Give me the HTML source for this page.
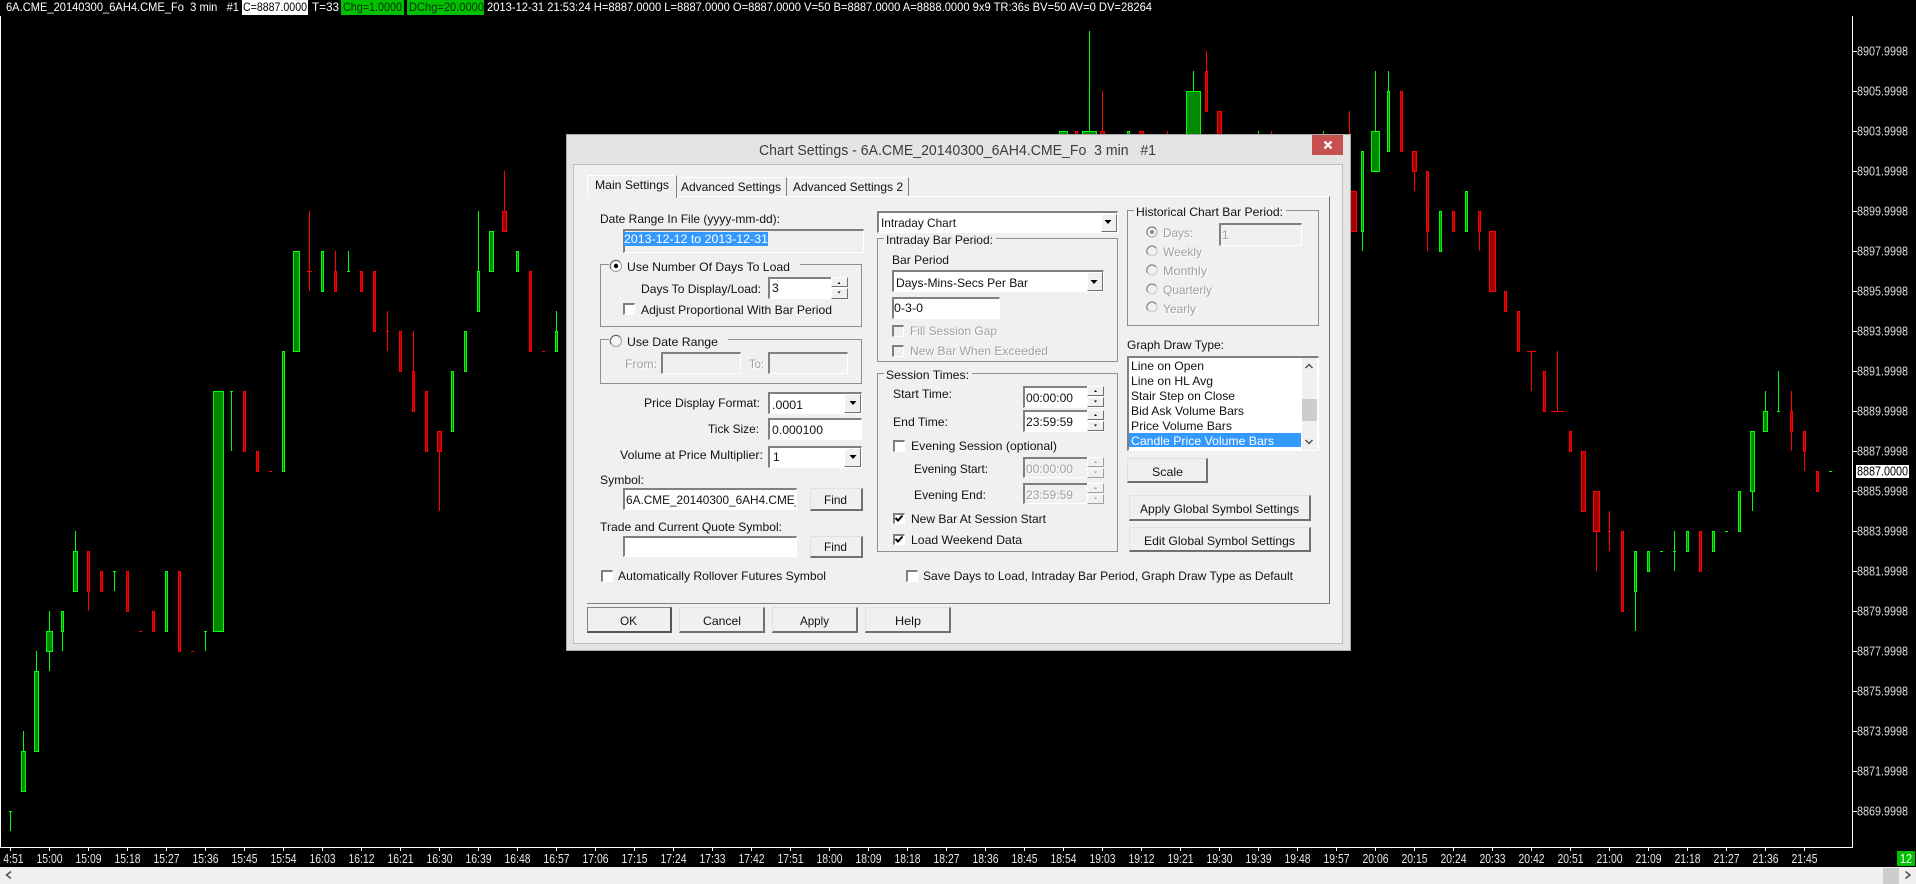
<!DOCTYPE html>
<html><head><meta charset="utf-8"><title>Chart Settings</title>
<style>
html,body{margin:0;padding:0;width:1916px;height:884px;overflow:hidden;background:#000}
svg{position:absolute;left:0;top:0}
text{font-family:"Liberation Sans",sans-serif;font-size:12px;fill:#111}
.a{position:absolute;box-sizing:border-box}
.btn{background:#f0f0f0;border-style:solid;border-width:1px 2px 2px 1px;border-color:#e0e0e0 #707070 #707070 #e0e0e0}
.ed{background:#fff;border-style:solid;border-width:2px 1px 1px 2px;border-color:#808080 #fff #fff #808080}
.dis{background:#f0f0f0}
.grp{border:1px solid #8f8f8f}
.gap{background:#f0f0f0}
.sb{background:#f0f0f0;border-style:solid;border-width:1px;border-color:#fff #707070 #707070 #fff}
.sbd{background:#f0f0f0;border-style:solid;border-width:1px;border-color:#fff #a0a0a0 #a0a0a0 #fff}
.tick{font-size:12.5px;fill:#e8e8e8;text-anchor:middle}
.prc{font-size:12.5px;fill:#dcdcdc}
.d text{fill:#a0a0a0}
.d{filter:drop-shadow(1px 1px 0 #fff)}
</style></head><body>
<svg width="1916" height="884" viewBox="0 0 1916 884">
<rect width="1916" height="884" fill="#000"/>
<!-- top bar -->
<rect x="242" y="0" width="66" height="15" fill="#fff"/>
<rect x="341" y="0" width="63" height="15" fill="#00c000"/>
<rect x="407" y="0" width="77" height="15" fill="#00c000"/>
<text x="6" y="11" style="fill:#fff" textLength="233" lengthAdjust="spacingAndGlyphs">6A.CME_20140300_6AH4.CME_Fo&#160;&#160;3 min&#160;&#160;&#160;#1</text>
<text x="243" y="11" style="fill:#000" textLength="64" lengthAdjust="spacingAndGlyphs">C=8887.0000</text>
<text x="312" y="11" style="fill:#fff" textLength="27" lengthAdjust="spacingAndGlyphs">T=33</text>
<text x="343" y="11" style="fill:#003000" textLength="59" lengthAdjust="spacingAndGlyphs">Chg=1.0000</text>
<text x="409" y="11" style="fill:#003000" textLength="75" lengthAdjust="spacingAndGlyphs">DChg=20.0000</text>
<text x="487" y="11" style="fill:#fff" textLength="665" lengthAdjust="spacingAndGlyphs">2013-12-31 21:53:24 H=8887.0000 L=8887.0000 O=8887.0000 V=50 B=8887.0000 A=8888.0000 9x9 TR:36s BV=50 AV=0 DV=28264</text>
<!-- axes -->
<path d="M.5 16V847.5H1852.5V16" fill="none" stroke="#fff"/>
<line x1="10" y1="849" x2="1806" y2="849" stroke="#fff" stroke-width="4" stroke-dasharray="1 38"/>
<line x1="1855" y1="51" x2="1855" y2="812" stroke="#fff" stroke-width="4" stroke-dasharray="1 39"/>
<!-- wicks -->
<path fill="none" stroke="#00ff00" d="M10.5 811V831M23.5 731V751M36.5 651V671M49.5 611V671M62.5 611V651M75.5 531V551M114.5 571V591M205.5 631V651M231.5 391V451M348.5 251V271M478.5 211V271M556.5 311V331M1089.5 31V131M1193.5 71V91M1258.5 131V134M1323.5 131V134M1362.5 231V251M1375.5 71V131M1388.5 71V91M1635.5 591V631M1674.5 531V571M1752.5 491V511M1765.5 391V411M1778.5 371V411M9 811.5h3M113 571.5h3M204 631.5h3M230 391.5h3M347 271.5h3M1660 551.5h3M1673 551.5h3M1725 531.5h3M1777 411.5h3M1829 471.5h3"/>
<path fill="none" stroke="#ff0000" d="M88.5 591V611M309.5 211V291M335.5 251V271M387.5 311V351M413.5 331V371M439.5 451V511M504.5 171V211M1102.5 91V131M1167.5 131V134M1206.5 51V71M1271.5 131V134M1349.5 111V134M1414.5 171V191M1427.5 231V251M1479.5 231V251M1531.5 351V391M1557.5 351V411M1596.5 531V571M1609.5 511V551M1791.5 391V451M1804.5 451V471M139 631.5h3M191 651.5h3M269 471.5h3M307 271.5h5M386 331.5h3M542 351.5h3M1527 351.5h9M1551 411.5h13M1608 531.5h3"/>
<!-- green bodies -->
<g fill="#008800" stroke="#00ff00">
<rect x="21.5" y="751.5" width="4" height="40"/><rect x="34.5" y="671.5" width="4" height="80"/><rect x="46.5" y="631.5" width="6" height="20"/><rect x="61.5" y="611.5" width="2" height="20"/><rect x="73.5" y="551.5" width="4" height="40"/><rect x="165.5" y="571.5" width="2" height="60"/><rect x="213.5" y="391.5" width="10" height="240"/><rect x="282.5" y="351.5" width="2" height="120"/><rect x="293.5" y="251.5" width="6" height="100"/><rect x="321.5" y="251.5" width="2" height="40"/><rect x="451.5" y="371.5" width="2" height="60"/><rect x="464.5" y="331.5" width="2" height="40"/><rect x="477.5" y="271.5" width="2" height="40"/><rect x="489.5" y="231.5" width="4" height="40"/><rect x="516.5" y="251.5" width="2" height="20"/><rect x="555.5" y="331.5" width="2" height="20"/><rect x="1059.5" y="131.5" width="8" height="20"/><rect x="1082.5" y="131.5" width="14" height="20"/><rect x="1127.5" y="131.5" width="2" height="20"/><rect x="1186.5" y="91.5" width="14" height="60"/><rect x="1361.5" y="151.5" width="2" height="80"/><rect x="1371.5" y="131.5" width="8" height="40"/><rect x="1387.5" y="91.5" width="2" height="60"/><rect x="1439.5" y="211.5" width="2" height="40"/><rect x="1465.5" y="191.5" width="2" height="40"/><rect x="1634.5" y="551.5" width="2" height="40"/><rect x="1647.5" y="551.5" width="2" height="20"/><rect x="1686.5" y="531.5" width="2" height="20"/><rect x="1712.5" y="531.5" width="2" height="20"/><rect x="1738.5" y="491.5" width="2" height="40"/><rect x="1750.5" y="431.5" width="4" height="60"/><rect x="1763.5" y="411.5" width="4" height="20"/>
</g>
<!-- red bodies -->
<g fill="#a00000" stroke="#ff0000">
<rect x="87.5" y="551.5" width="2" height="40"/><rect x="100.5" y="571.5" width="2" height="20"/><rect x="126.5" y="571.5" width="2" height="40"/><rect x="152.5" y="611.5" width="2" height="20"/><rect x="178.5" y="571.5" width="2" height="80"/><rect x="243.5" y="391.5" width="2" height="60"/><rect x="256.5" y="451.5" width="2" height="20"/><rect x="334.5" y="271.5" width="2" height="20"/><rect x="360.5" y="271.5" width="2" height="20"/><rect x="373.5" y="271.5" width="2" height="60"/><rect x="399.5" y="331.5" width="2" height="40"/><rect x="412.5" y="371.5" width="2" height="40"/><rect x="425.5" y="391.5" width="2" height="60"/><rect x="437.5" y="431.5" width="4" height="20"/><rect x="502.5" y="211.5" width="4" height="20"/><rect x="529.5" y="271.5" width="2" height="80"/><rect x="1075.5" y="131.5" width="2" height="20"/><rect x="1100.5" y="131.5" width="4" height="20"/><rect x="1139.5" y="131.5" width="4" height="20"/><rect x="1205.5" y="71.5" width="2" height="40"/><rect x="1217.5" y="111.5" width="4" height="30"/><rect x="1342.5" y="191.5" width="14" height="40"/><rect x="1400.5" y="91.5" width="2" height="60"/><rect x="1412.5" y="151.5" width="4" height="20"/><rect x="1426.5" y="171.5" width="2" height="60"/><rect x="1452.5" y="211.5" width="2" height="20"/><rect x="1478.5" y="211.5" width="2" height="20"/><rect x="1489.5" y="231.5" width="6" height="60"/><rect x="1504.5" y="291.5" width="2" height="20"/><rect x="1517.5" y="311.5" width="2" height="40"/><rect x="1543.5" y="371.5" width="2" height="40"/><rect x="1569.5" y="431.5" width="2" height="20"/><rect x="1581.5" y="451.5" width="4" height="60"/><rect x="1593.5" y="491.5" width="6" height="40"/><rect x="1621.5" y="531.5" width="2" height="80"/><rect x="1699.5" y="531.5" width="2" height="40"/><rect x="1790.5" y="411.5" width="2" height="20"/><rect x="1803.5" y="431.5" width="2" height="20"/><rect x="1816.5" y="471.5" width="2" height="20"/>
</g>
<!-- price labels -->
<text class="prc" x="1857" y="55.5" textLength="51" lengthAdjust="spacingAndGlyphs">8907.9998</text>
<text class="prc" x="1857" y="95.5" textLength="51" lengthAdjust="spacingAndGlyphs">8905.9998</text>
<text class="prc" x="1857" y="135.5" textLength="51" lengthAdjust="spacingAndGlyphs">8903.9998</text>
<text class="prc" x="1857" y="175.5" textLength="51" lengthAdjust="spacingAndGlyphs">8901.9998</text>
<text class="prc" x="1857" y="215.5" textLength="51" lengthAdjust="spacingAndGlyphs">8899.9998</text>
<text class="prc" x="1857" y="255.5" textLength="51" lengthAdjust="spacingAndGlyphs">8897.9998</text>
<text class="prc" x="1857" y="295.5" textLength="51" lengthAdjust="spacingAndGlyphs">8895.9998</text>
<text class="prc" x="1857" y="335.5" textLength="51" lengthAdjust="spacingAndGlyphs">8893.9998</text>
<text class="prc" x="1857" y="375.5" textLength="51" lengthAdjust="spacingAndGlyphs">8891.9998</text>
<text class="prc" x="1857" y="415.5" textLength="51" lengthAdjust="spacingAndGlyphs">8889.9998</text>
<text class="prc" x="1857" y="455.5" textLength="51" lengthAdjust="spacingAndGlyphs">8887.9998</text>
<text class="prc" x="1857" y="495.5" textLength="51" lengthAdjust="spacingAndGlyphs">8885.9998</text>
<text class="prc" x="1857" y="535.5" textLength="51" lengthAdjust="spacingAndGlyphs">8883.9998</text>
<text class="prc" x="1857" y="575.5" textLength="51" lengthAdjust="spacingAndGlyphs">8881.9998</text>
<text class="prc" x="1857" y="615.5" textLength="51" lengthAdjust="spacingAndGlyphs">8879.9998</text>
<text class="prc" x="1857" y="655.5" textLength="51" lengthAdjust="spacingAndGlyphs">8877.9998</text>
<text class="prc" x="1857" y="695.5" textLength="51" lengthAdjust="spacingAndGlyphs">8875.9998</text>
<text class="prc" x="1857" y="735.5" textLength="51" lengthAdjust="spacingAndGlyphs">8873.9998</text>
<text class="prc" x="1857" y="775.5" textLength="51" lengthAdjust="spacingAndGlyphs">8871.9998</text>
<text class="prc" x="1857" y="815.5" textLength="51" lengthAdjust="spacingAndGlyphs">8869.9998</text>
<rect x="1856" y="465" width="53" height="13" fill="#fff"/>
<text class="prc" x="1857" y="475.5" style="fill:#000" textLength="51" lengthAdjust="spacingAndGlyphs">8887.0000</text>
<!-- time labels -->
<text class="tick" x="10.5" y="863" textLength="26" lengthAdjust="spacingAndGlyphs">14:51</text>
<rect x="0" y="852" width="3" height="14" fill="#000"/>
<text class="tick" x="49.5" y="863" textLength="26" lengthAdjust="spacingAndGlyphs">15:00</text>
<text class="tick" x="88.5" y="863" textLength="26" lengthAdjust="spacingAndGlyphs">15:09</text>
<text class="tick" x="127.5" y="863" textLength="26" lengthAdjust="spacingAndGlyphs">15:18</text>
<text class="tick" x="166.5" y="863" textLength="26" lengthAdjust="spacingAndGlyphs">15:27</text>
<text class="tick" x="205.5" y="863" textLength="26" lengthAdjust="spacingAndGlyphs">15:36</text>
<text class="tick" x="244.5" y="863" textLength="26" lengthAdjust="spacingAndGlyphs">15:45</text>
<text class="tick" x="283.5" y="863" textLength="26" lengthAdjust="spacingAndGlyphs">15:54</text>
<text class="tick" x="322.5" y="863" textLength="26" lengthAdjust="spacingAndGlyphs">16:03</text>
<text class="tick" x="361.5" y="863" textLength="26" lengthAdjust="spacingAndGlyphs">16:12</text>
<text class="tick" x="400.5" y="863" textLength="26" lengthAdjust="spacingAndGlyphs">16:21</text>
<text class="tick" x="439.5" y="863" textLength="26" lengthAdjust="spacingAndGlyphs">16:30</text>
<text class="tick" x="478.5" y="863" textLength="26" lengthAdjust="spacingAndGlyphs">16:39</text>
<text class="tick" x="517.5" y="863" textLength="26" lengthAdjust="spacingAndGlyphs">16:48</text>
<text class="tick" x="556.5" y="863" textLength="26" lengthAdjust="spacingAndGlyphs">16:57</text>
<text class="tick" x="595.5" y="863" textLength="26" lengthAdjust="spacingAndGlyphs">17:06</text>
<text class="tick" x="634.5" y="863" textLength="26" lengthAdjust="spacingAndGlyphs">17:15</text>
<text class="tick" x="673.5" y="863" textLength="26" lengthAdjust="spacingAndGlyphs">17:24</text>
<text class="tick" x="712.5" y="863" textLength="26" lengthAdjust="spacingAndGlyphs">17:33</text>
<text class="tick" x="751.5" y="863" textLength="26" lengthAdjust="spacingAndGlyphs">17:42</text>
<text class="tick" x="790.5" y="863" textLength="26" lengthAdjust="spacingAndGlyphs">17:51</text>
<text class="tick" x="829.5" y="863" textLength="26" lengthAdjust="spacingAndGlyphs">18:00</text>
<text class="tick" x="868.5" y="863" textLength="26" lengthAdjust="spacingAndGlyphs">18:09</text>
<text class="tick" x="907.5" y="863" textLength="26" lengthAdjust="spacingAndGlyphs">18:18</text>
<text class="tick" x="946.5" y="863" textLength="26" lengthAdjust="spacingAndGlyphs">18:27</text>
<text class="tick" x="985.5" y="863" textLength="26" lengthAdjust="spacingAndGlyphs">18:36</text>
<text class="tick" x="1024.5" y="863" textLength="26" lengthAdjust="spacingAndGlyphs">18:45</text>
<text class="tick" x="1063.5" y="863" textLength="26" lengthAdjust="spacingAndGlyphs">18:54</text>
<text class="tick" x="1102.5" y="863" textLength="26" lengthAdjust="spacingAndGlyphs">19:03</text>
<text class="tick" x="1141.5" y="863" textLength="26" lengthAdjust="spacingAndGlyphs">19:12</text>
<text class="tick" x="1180.5" y="863" textLength="26" lengthAdjust="spacingAndGlyphs">19:21</text>
<text class="tick" x="1219.5" y="863" textLength="26" lengthAdjust="spacingAndGlyphs">19:30</text>
<text class="tick" x="1258.5" y="863" textLength="26" lengthAdjust="spacingAndGlyphs">19:39</text>
<text class="tick" x="1297.5" y="863" textLength="26" lengthAdjust="spacingAndGlyphs">19:48</text>
<text class="tick" x="1336.5" y="863" textLength="26" lengthAdjust="spacingAndGlyphs">19:57</text>
<text class="tick" x="1375.5" y="863" textLength="26" lengthAdjust="spacingAndGlyphs">20:06</text>
<text class="tick" x="1414.5" y="863" textLength="26" lengthAdjust="spacingAndGlyphs">20:15</text>
<text class="tick" x="1453.5" y="863" textLength="26" lengthAdjust="spacingAndGlyphs">20:24</text>
<text class="tick" x="1492.5" y="863" textLength="26" lengthAdjust="spacingAndGlyphs">20:33</text>
<text class="tick" x="1531.5" y="863" textLength="26" lengthAdjust="spacingAndGlyphs">20:42</text>
<text class="tick" x="1570.5" y="863" textLength="26" lengthAdjust="spacingAndGlyphs">20:51</text>
<text class="tick" x="1609.5" y="863" textLength="26" lengthAdjust="spacingAndGlyphs">21:00</text>
<text class="tick" x="1648.5" y="863" textLength="26" lengthAdjust="spacingAndGlyphs">21:09</text>
<text class="tick" x="1687.5" y="863" textLength="26" lengthAdjust="spacingAndGlyphs">21:18</text>
<text class="tick" x="1726.5" y="863" textLength="26" lengthAdjust="spacingAndGlyphs">21:27</text>
<text class="tick" x="1765.5" y="863" textLength="26" lengthAdjust="spacingAndGlyphs">21:36</text>
<text class="tick" x="1804.5" y="863" textLength="26" lengthAdjust="spacingAndGlyphs">21:45</text>
<rect x="1897" y="851" width="18" height="15" fill="#00c000"/>
<text x="1906" y="863" style="fill:#fff;text-anchor:middle;font-size:12.5px" textLength="12" lengthAdjust="spacingAndGlyphs">12</text>
<!-- bottom scrollbar -->
<rect x="0" y="867" width="1916" height="17" fill="#f0f0f0"/>
<rect x="1883" y="868" width="16" height="16" fill="#cdcdcd"/>
<path d="M11 871.500l-4.500 3.500 4.500 3.500M1905.500 871.500l4.500 3.500-4.500 3.500" fill="none" stroke="#505050" stroke-width="1.500"/>
</svg>

<!-- dialog -->
<div class="a" style="left:566px;top:134px;width:785px;height:517px;background:#e4e4e4;border:1px solid #a8a8a8"></div>
<div class="a" style="left:1312px;top:135px;width:31px;height:20px;background:#c75050"></div>
<div class="a" style="left:573px;top:164px;width:770px;height:480px;background:#f0f0f0;border:1px solid #c0c0c0"></div>
<!-- tab page -->
<div class="a" style="left:587px;top:196px;width:743px;height:408px;border-top:1px solid #fff;border-right:1px solid #707070;border-bottom:1px solid #808080"></div>
<div class="a" style="left:587px;top:175px;width:90px;height:23px;background:#f0f0f0;border-top:1px solid #fff;border-left:1px solid #fff;border-right:1px solid #808080"></div>
<div class="a" style="left:677px;top:177px;width:110px;height:19px;border-top:1px solid #fff;border-right:1px solid #808080"></div>
<div class="a" style="left:787px;top:177px;width:122px;height:19px;border-top:1px solid #fff;border-right:1px solid #808080"></div>
<!-- left column -->
<div class="a ed dis" style="left:623px;top:229px;width:241px;height:24px"></div>
<div class="a" style="left:624px;top:232px;width:144px;height:14px;background:#3399ff"></div>
<div class="a grp" style="left:600px;top:264px;width:262px;height:63px"></div>
<div class="a gap" style="left:609px;top:260px;width:191px;height:10px"></div>
<div class="a ed" style="left:768px;top:277px;width:80px;height:22px"></div>
<div class="a sb" style="left:831px;top:277px;width:17px;height:10px"></div>
<div class="a sb" style="left:831px;top:288px;width:17px;height:11px"></div>
<div class="a ed" style="left:623px;top:303px;width:12px;height:12px"></div>
<div class="a grp" style="left:600px;top:339px;width:262px;height:45px"></div>
<div class="a gap" style="left:609px;top:335px;width:119px;height:10px"></div>
<div class="a ed dis" style="left:661px;top:352px;width:80px;height:22px"></div>
<div class="a ed dis" style="left:768px;top:352px;width:80px;height:22px"></div>
<div class="a ed" style="left:768px;top:392px;width:94px;height:22px"></div>
<div class="a sb" style="left:844px;top:394px;width:17px;height:19px"></div>
<div class="a ed" style="left:768px;top:418px;width:94px;height:22px"></div>
<div class="a ed" style="left:768px;top:446px;width:94px;height:22px"></div>
<div class="a sb" style="left:844px;top:448px;width:17px;height:19px"></div>
<div class="a ed" style="left:623px;top:488px;width:174px;height:22px"></div>
<div class="a btn" style="left:810px;top:488px;width:53px;height:23px"></div>
<div class="a ed" style="left:623px;top:536px;width:174px;height:21px"></div>
<div class="a btn" style="left:810px;top:536px;width:53px;height:22px"></div>
<div class="a ed" style="left:601px;top:570px;width:12px;height:12px"></div>
<!-- bottom buttons -->
<div class="a btn" style="left:587px;top:607px;width:85px;height:26px;border-color:#808080 #555 #555 #808080"></div>
<div class="a btn" style="left:679px;top:607px;width:86px;height:26px"></div>
<div class="a btn" style="left:772px;top:607px;width:86px;height:26px"></div>
<div class="a btn" style="left:865px;top:607px;width:86px;height:26px"></div>
<!-- middle column -->
<div class="a ed" style="left:877px;top:211px;width:241px;height:22px"></div>
<div class="a sb" style="left:1101px;top:214px;width:16px;height:18px"></div>
<div class="a grp" style="left:877px;top:238px;width:241px;height:124px"></div>
<div class="a gap" style="left:884px;top:234px;width:112px;height:10px"></div>
<div class="a ed" style="left:892px;top:270px;width:212px;height:22px"></div>
<div class="a sb" style="left:1087px;top:272px;width:16px;height:19px"></div>
<div class="a ed" style="left:892px;top:297px;width:108px;height:22px"></div>
<div class="a ed dis" style="left:892px;top:325px;width:12px;height:12px"></div>
<div class="a ed dis" style="left:892px;top:345px;width:12px;height:12px"></div>
<div class="a grp" style="left:877px;top:373px;width:241px;height:179px"></div>
<div class="a gap" style="left:884px;top:369px;width:88px;height:10px"></div>
<div class="a ed" style="left:1023px;top:386px;width:81px;height:22px"></div>
<div class="a sb" style="left:1087px;top:386px;width:17px;height:10px"></div>
<div class="a sb" style="left:1087px;top:397px;width:17px;height:10px"></div>
<div class="a ed" style="left:1023px;top:410px;width:81px;height:22px"></div>
<div class="a sb" style="left:1087px;top:410px;width:17px;height:10px"></div>
<div class="a sb" style="left:1087px;top:421px;width:17px;height:10px"></div>
<div class="a ed" style="left:893px;top:440px;width:12px;height:12px"></div>
<div class="a ed dis" style="left:1023px;top:457px;width:81px;height:21px"></div>
<div class="a sbd" style="left:1087px;top:457px;width:17px;height:10px"></div>
<div class="a sbd" style="left:1087px;top:468px;width:17px;height:10px"></div>
<div class="a ed dis" style="left:1023px;top:483px;width:81px;height:21px"></div>
<div class="a sbd" style="left:1087px;top:483px;width:17px;height:10px"></div>
<div class="a sbd" style="left:1087px;top:494px;width:17px;height:10px"></div>
<div class="a ed" style="left:893px;top:513px;width:12px;height:11px"></div>
<div class="a ed" style="left:893px;top:534px;width:12px;height:11px"></div>
<div class="a ed" style="left:906px;top:570px;width:12px;height:12px"></div>
<!-- right column -->
<div class="a grp" style="left:1127px;top:210px;width:192px;height:116px"></div>
<div class="a gap" style="left:1134px;top:206px;width:152px;height:10px"></div>
<div class="a ed dis" style="left:1219px;top:223px;width:83px;height:23px"></div>
<div class="a ed" style="left:1127px;top:356px;width:192px;height:95px"></div>
<div class="a" style="left:1129px;top:433px;width:172px;height:14px;background:#3399ff"></div>
<div class="a" style="left:1302px;top:358px;width:15px;height:92px;background:#f0f0f0"></div>
<div class="a" style="left:1302px;top:399px;width:15px;height:22px;background:#cdcdcd"></div>
<div class="a btn" style="left:1127px;top:458px;width:81px;height:25px"></div>
<div class="a btn" style="left:1129px;top:495px;width:182px;height:26px"></div>
<div class="a btn" style="left:1129px;top:527px;width:182px;height:25px"></div>

<!-- dialog text and glyphs -->
<svg width="1916" height="884" viewBox="0 0 1916 884">
<text x="759" y="155" style="font-size:15px;fill:#3c3c3c" textLength="397" lengthAdjust="spacingAndGlyphs">Chart Settings - 6A.CME_20140300_6AH4.CME_Fo&#160;&#160;3 min&#160;&#160;&#160;#1</text>
<path d="M1324.500 141.500l7 7M1331.500 141.500l-7 7" stroke="#fff" stroke-width="2.200" fill="none"/>
<text x="595" y="189" textLength="74" lengthAdjust="spacingAndGlyphs">Main Settings</text>
<text x="681" y="191" textLength="100" lengthAdjust="spacingAndGlyphs">Advanced Settings</text>
<text x="793" y="191" textLength="110" lengthAdjust="spacingAndGlyphs">Advanced Settings 2</text>
<text x="600" y="223" textLength="180" lengthAdjust="spacingAndGlyphs">Date Range In File (yyyy-mm-dd):</text>
<text x="624" y="243" style="fill:#fff" textLength="144" lengthAdjust="spacingAndGlyphs">2013-12-12 to 2013-12-31</text>
<circle cx="616" cy="266" r="5.500" fill="#fff" stroke="#a0a0a0"/><path d="M612 262a5.500 5.500 0 0 1 8 0M611 269a5.500 5.500 0 0 1 1-7" stroke="#606060" fill="none"/><circle cx="616" cy="266" r="2.200" fill="#000"/>
<text x="627" y="271" textLength="163" lengthAdjust="spacingAndGlyphs">Use Number Of Days To Load</text>
<text x="641" y="293" textLength="120" lengthAdjust="spacingAndGlyphs">Days To Display/Load:</text>
<text x="772" y="292">3</text>
<path d="M837.500 284h3l-1.500-2zM837.500 291.500h3l-1.500 2z" fill="#000"/>
<text x="641" y="314" textLength="191" lengthAdjust="spacingAndGlyphs">Adjust Proportional With Bar Period</text>
<circle cx="616" cy="341" r="5.500" fill="#f4f4f4" stroke="#a0a0a0"/><path d="M612 337a5.500 5.500 0 0 1 8 0M611 344a5.500 5.500 0 0 1 1-7" stroke="#606060" fill="none"/>
<text x="627" y="346" textLength="91" lengthAdjust="spacingAndGlyphs">Use Date Range</text>
<g class="d">
<text x="625" y="368" textLength="32" lengthAdjust="spacingAndGlyphs">From:</text>
<text x="749" y="368" textLength="15" lengthAdjust="spacingAndGlyphs">To:</text>
<text x="910" y="335" textLength="87" lengthAdjust="spacingAndGlyphs">Fill Session Gap</text>
<text x="910" y="355" textLength="138" lengthAdjust="spacingAndGlyphs">New Bar When Exceeded</text>
<text x="1026" y="473" textLength="47" lengthAdjust="spacingAndGlyphs">00:00:00</text>
<text x="1026" y="499" textLength="47" lengthAdjust="spacingAndGlyphs">23:59:59</text>
<text x="1163" y="237" textLength="30" lengthAdjust="spacingAndGlyphs">Days:</text>
<text x="1163" y="256" textLength="39" lengthAdjust="spacingAndGlyphs">Weekly</text>
<text x="1163" y="275" textLength="44" lengthAdjust="spacingAndGlyphs">Monthly</text>
<text x="1163" y="294" textLength="49" lengthAdjust="spacingAndGlyphs">Quarterly</text>
<text x="1163" y="313" textLength="33" lengthAdjust="spacingAndGlyphs">Yearly</text>
<text x="1222" y="239">1</text>
</g>
<text x="644" y="407" textLength="116" lengthAdjust="spacingAndGlyphs">Price Display Format:</text>
<text x="772" y="409" textLength="31" lengthAdjust="spacingAndGlyphs">.0001</text>
<path d="M849.500 401h7l-3.500 4zM849.500 455h7l-3.500 4zM1104.500 220h7l-3.500 4zM1090.500 280h7l-3.500 4z" fill="#000"/>
<text x="708" y="433" textLength="51" lengthAdjust="spacingAndGlyphs">Tick Size:</text>
<text x="772" y="434" textLength="51" lengthAdjust="spacingAndGlyphs">0.000100</text>
<text x="620" y="459" textLength="143" lengthAdjust="spacingAndGlyphs">Volume at Price Multiplier:</text>
<text x="773" y="461">1</text>
<text x="600" y="484" textLength="44" lengthAdjust="spacingAndGlyphs">Symbol:</text>
<svg x="625" y="490" width="171" height="19"><text x="1" y="14" textLength="189" lengthAdjust="spacingAndGlyphs">6A.CME_20140300_6AH4.CME_Fo</text></svg>
<text x="824" y="504" textLength="23" lengthAdjust="spacingAndGlyphs">Find</text>
<text x="600" y="531" textLength="182" lengthAdjust="spacingAndGlyphs">Trade and Current Quote Symbol:</text>
<text x="824" y="551" textLength="23" lengthAdjust="spacingAndGlyphs">Find</text>
<text x="618" y="580" textLength="208" lengthAdjust="spacingAndGlyphs">Automatically Rollover Futures Symbol</text>
<text x="620" y="625" textLength="17" lengthAdjust="spacingAndGlyphs">OK</text>
<text x="703" y="625" textLength="38" lengthAdjust="spacingAndGlyphs">Cancel</text>
<text x="800" y="625" textLength="29" lengthAdjust="spacingAndGlyphs">Apply</text>
<text x="895" y="625" textLength="26" lengthAdjust="spacingAndGlyphs">Help</text>
<text x="881" y="227" textLength="75" lengthAdjust="spacingAndGlyphs">Intraday Chart</text>
<text x="886" y="244" textLength="107" lengthAdjust="spacingAndGlyphs">Intraday Bar Period:</text>
<text x="892" y="264" textLength="57" lengthAdjust="spacingAndGlyphs">Bar Period</text>
<text x="896" y="287" textLength="132" lengthAdjust="spacingAndGlyphs">Days-Mins-Secs Per Bar</text>
<text x="894" y="312" textLength="29" lengthAdjust="spacingAndGlyphs">0-3-0</text>
<text x="886" y="379" textLength="83" lengthAdjust="spacingAndGlyphs">Session Times:</text>
<text x="893" y="398" textLength="59" lengthAdjust="spacingAndGlyphs">Start Time:</text>
<text x="1026" y="402" textLength="47" lengthAdjust="spacingAndGlyphs">00:00:00</text>
<text x="893" y="426" textLength="55" lengthAdjust="spacingAndGlyphs">End Time:</text>
<text x="1026" y="426" textLength="47" lengthAdjust="spacingAndGlyphs">23:59:59</text>
<path d="M1094 392h3l-1.500-2zM1094 400.500h3l-1.500 2zM1094 416h3l-1.500-2zM1094 424.500h3l-1.500 2z" fill="#000"/>
<path d="M1094 463h3l-1.500-2zM1094 471.500h3l-1.500 2zM1094 489h3l-1.500-2zM1094 497.500h3l-1.500 2z" fill="#a0a0a0"/>
<text x="911" y="450" textLength="146" lengthAdjust="spacingAndGlyphs">Evening Session (optional)</text>
<text x="914" y="473" textLength="74" lengthAdjust="spacingAndGlyphs">Evening Start:</text>
<text x="914" y="499" textLength="72" lengthAdjust="spacingAndGlyphs">Evening End:</text>
<path d="M895.500 518l2.500 2.500 4.500-5M895.500 539l2.500 2.500 4.500-5" stroke="#000" stroke-width="2" fill="none"/>
<text x="911" y="523" textLength="135" lengthAdjust="spacingAndGlyphs">New Bar At Session Start</text>
<text x="911" y="544" textLength="111" lengthAdjust="spacingAndGlyphs">Load Weekend Data</text>
<text x="923" y="580" textLength="370" lengthAdjust="spacingAndGlyphs">Save Days to Load, Intraday Bar Period, Graph Draw Type as Default</text>
<text x="1136" y="216" textLength="147" lengthAdjust="spacingAndGlyphs">Historical Chart Bar Period:</text>
<circle cx="1152" cy="232" r="5" fill="#f0f0f0" stroke="#a8a8a8"/><path d="M1148 229a5 5 0 0 1 8 0M1147.500 235a5 5 0 0 1 .5-6" stroke="#707070" fill="none"/><circle cx="1152" cy="232" r="2" fill="#8a8a8a"/>
<circle cx="1152" cy="251" r="5" fill="#f0f0f0" stroke="#c8c8c8"/><path d="M1148 248a5 5 0 0 1 8 0M1147.500 254a5 5 0 0 1 .5-6" stroke="#707070" fill="none"/>
<circle cx="1152" cy="270" r="5" fill="#f0f0f0" stroke="#c8c8c8"/><path d="M1148 267a5 5 0 0 1 8 0M1147.500 273a5 5 0 0 1 .5-6" stroke="#707070" fill="none"/>
<circle cx="1152" cy="289" r="5" fill="#f0f0f0" stroke="#c8c8c8"/><path d="M1148 286a5 5 0 0 1 8 0M1147.500 292a5 5 0 0 1 .5-6" stroke="#707070" fill="none"/>
<circle cx="1152" cy="307" r="5" fill="#f0f0f0" stroke="#c8c8c8"/><path d="M1148 304a5 5 0 0 1 8 0M1147.500 310a5 5 0 0 1 .5-6" stroke="#707070" fill="none"/>
<text x="1127" y="349" textLength="97" lengthAdjust="spacingAndGlyphs">Graph Draw Type:</text>
<text x="1131" y="370" textLength="73" lengthAdjust="spacingAndGlyphs">Line on Open</text>
<text x="1131" y="385" textLength="82" lengthAdjust="spacingAndGlyphs">Line on HL Avg</text>
<text x="1131" y="400" textLength="104" lengthAdjust="spacingAndGlyphs">Stair Step on Close</text>
<text x="1131" y="415" textLength="113" lengthAdjust="spacingAndGlyphs">Bid Ask Volume Bars</text>
<text x="1131" y="430" textLength="101" lengthAdjust="spacingAndGlyphs">Price Volume Bars</text>
<text x="1131" y="445" style="fill:#fff" textLength="143" lengthAdjust="spacingAndGlyphs">Candle Price Volume Bars</text>
<path d="M1305.500 368l3.500-3.500 3.500 3.500M1305.500 440l3.500 3.500 3.500-3.500" stroke="#505050" stroke-width="1.500" fill="none"/>
<text x="1152" y="476" textLength="31" lengthAdjust="spacingAndGlyphs">Scale</text>
<text x="1140" y="513" textLength="159" lengthAdjust="spacingAndGlyphs">Apply Global Symbol Settings</text>
<text x="1144" y="545" textLength="151" lengthAdjust="spacingAndGlyphs">Edit Global Symbol Settings</text>
</svg>
</body></html>
